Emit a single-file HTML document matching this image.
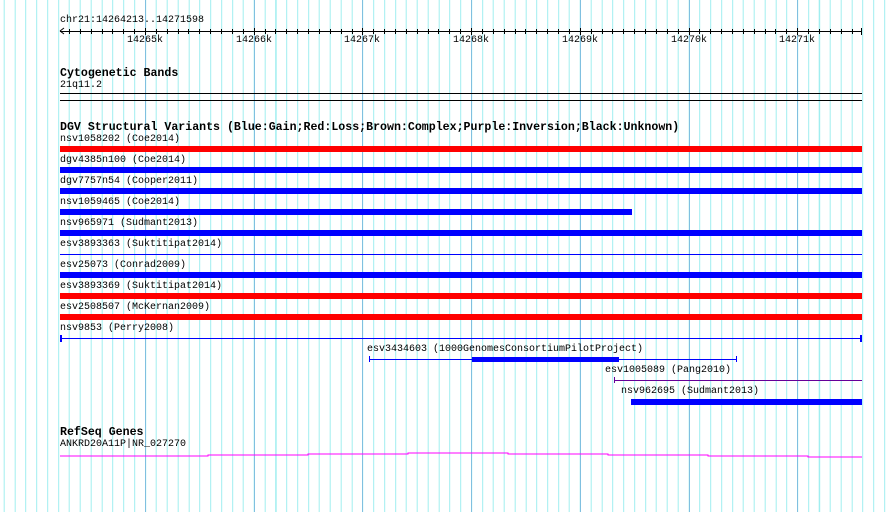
<!DOCTYPE html>
<html><head><meta charset="utf-8"><style>
body{margin:0;width:890px;height:512px;position:relative;overflow:hidden;background:#fff;font-family:"Liberation Mono",monospace;}
#grid{position:absolute;left:0;top:0;width:890px;height:512px;background:repeating-linear-gradient(to right,#a0eef0 0 1px,transparent 1px 10.87px);background-position:3.7px 0;}
.maj{position:absolute;top:0;height:512px;width:1px;background:#80c0e0;}
.t{position:absolute;font-size:10px;line-height:12px;color:#000;white-space:pre;}
.b{position:absolute;font-size:11.6px;line-height:13px;font-weight:bold;color:#000;white-space:pre;}
.r{position:absolute;}
</style></head><body>
<div id="grid"></div>
<div class="maj" style="left:145px"></div><div class="maj" style="left:254px"></div><div class="maj" style="left:362px"></div><div class="maj" style="left:471px"></div><div class="maj" style="left:580px"></div><div class="maj" style="left:689px"></div><div class="maj" style="left:797px"></div>

<div class="t" style="left:60px;top:15px">chr21:14264213..14271598</div>
<div class="r" style="left:60px;top:31px;width:802px;height:1px;background:#000"></div>
<svg class="r" style="left:0;top:26px" width="890" height="12"><path d="M60 5 L64 2 M60 5 L64 8" stroke="#000" fill="none"/></svg>
<div class="t" style="left:127px;top:35px">14265k</div>
<div class="t" style="left:236px;top:35px">14266k</div>
<div class="t" style="left:344px;top:35px">14267k</div>
<div class="t" style="left:453px;top:35px">14268k</div>
<div class="t" style="left:562px;top:35px">14269k</div>
<div class="t" style="left:671px;top:35px">14270k</div>
<div class="t" style="left:779px;top:35px">14271k</div>

<div class="b" style="left:60px;top:67px">Cytogenetic Bands</div>
<div class="t" style="left:60px;top:80px">21q11.2</div>
<div class="r" style="left:60px;top:93px;width:802px;height:1px;background:#000"></div>
<div class="r" style="left:60px;top:100px;width:802px;height:1px;background:#000"></div>

<div class="b" style="left:60px;top:121px">DGV Structural Variants (Blue:Gain;Red:Loss;Brown:Complex;Purple:Inversion;Black:Unknown)</div>

<div class="t" style="left:60px;top:134px">nsv1058202 (Coe2014)</div>
<div class="r" style="left:60px;top:146px;width:802px;height:6px;background:#f00"></div>
<div class="t" style="left:60px;top:155px">dgv4385n100 (Coe2014)</div>
<div class="r" style="left:60px;top:167px;width:802px;height:6px;background:#00f"></div>
<div class="t" style="left:60px;top:176px">dgv7757n54 (Cooper2011)</div>
<div class="r" style="left:60px;top:188px;width:802px;height:6px;background:#00f"></div>
<div class="t" style="left:60px;top:197px">nsv1059465 (Coe2014)</div>
<div class="r" style="left:60px;top:209px;width:572px;height:6px;background:#00f"></div>
<div class="t" style="left:60px;top:218px">nsv965971 (Sudmant2013)</div>
<div class="r" style="left:60px;top:230px;width:802px;height:6px;background:#00f"></div>
<div class="t" style="left:60px;top:239px">esv3893363 (Suktitipat2014)</div>
<div class="r" style="left:60px;top:254px;width:802px;height:1px;background:#00f"></div>
<div class="t" style="left:60px;top:260px">esv25073 (Conrad2009)</div>
<div class="r" style="left:60px;top:272px;width:802px;height:6px;background:#00f"></div>
<div class="t" style="left:60px;top:281px">esv3893369 (Suktitipat2014)</div>
<div class="r" style="left:60px;top:293px;width:802px;height:6px;background:#f00"></div>
<div class="t" style="left:60px;top:302px">esv2508507 (McKernan2009)</div>
<div class="r" style="left:60px;top:314px;width:802px;height:6px;background:#f00"></div>
<div class="t" style="left:60px;top:323px">nsv9853 (Perry2008)</div>
<div class="r" style="left:60px;top:338px;width:802px;height:1px;background:#00f"></div>
<div class="r" style="left:60px;top:335px;width:2px;height:7px;background:#00f"></div>
<div class="r" style="left:860px;top:335px;width:2px;height:7px;background:#00f"></div>

<div class="t" style="left:367px;top:344px">esv3434603 (1000GenomesConsortiumPilotProject)</div>
<div class="r" style="left:369px;top:359px;width:368px;height:1px;background:#00f"></div>
<div class="r" style="left:369px;top:356px;width:1px;height:6px;background:#00f"></div>
<div class="r" style="left:736px;top:356px;width:1px;height:6px;background:#00f"></div>
<div class="r" style="left:472px;top:357px;width:147px;height:5px;background:#00f"></div>

<div class="t" style="left:605px;top:365px">esv1005089 (Pang2010)</div>
<div class="r" style="left:614px;top:380px;width:248px;height:1px;background:#609"></div>
<div class="r" style="left:614px;top:377px;width:1px;height:6px;background:#609"></div>

<div class="t" style="left:621px;top:386px">nsv962695 (Sudmant2013)</div>
<div class="r" style="left:631px;top:399px;width:231px;height:6px;background:#00f"></div>

<div class="b" style="left:60px;top:426px">RefSeq Genes</div>
<div class="t" style="left:60px;top:439px">ANKRD20A11P|NR_027270</div>
<svg class="r" style="left:0;top:450px" width="890" height="10"><path d="M60 6 H208 V5 H308 V4 H408 V3 H508 V4 H608 V5 H708 V6 H808 V7 H862" stroke="#f0f" fill="none"/></svg>

<svg class="r" style="left:0;top:0" width="890" height="40" id="tk"></svg>
<script>
var s='';for(var x=145-10.87*8;x<862;x+=10.87){if(x<60)continue;var X=Math.round(x)+0.5;var big=Math.abs(((x-145)/108.7)-Math.round((x-145)/108.7))<0.05;s+='<line x1="'+X+'" x2="'+X+'" y1="'+(big?28:29)+'" y2="'+(big?35:34)+'" stroke="#000"/>';}
s+='<line x1="861.5" x2="861.5" y1="28" y2="35" stroke="#000"/>';
document.getElementById('tk').innerHTML=s;
</script>
</body></html>
